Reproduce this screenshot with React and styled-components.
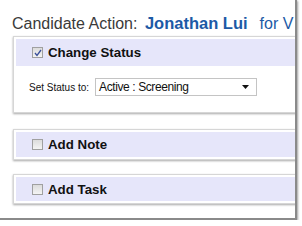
import styled, { createGlobalStyle } from "styled-components"

const Global = createGlobalStyle`
  html, body { margin: 0; padding: 0; background: #fff; }
  body { font-family: "Liberation Sans", Arial, sans-serif; }
`;

const Frame = styled.div`
  width: 297px;
  height: 220px;
  overflow: hidden;
  background: #fff;
  border-right: 2px solid #8a8a8a;
  border-bottom: 2px solid #8a8a8a;
  box-shadow: 1px 1px 2px rgba(0,0,0,0.35), 0 -1px 2px rgba(0,0,0,0.08);
  padding: 13px 0 0 13px;
  box-sizing: border-box;
`;

const Title = styled.div`
  font-size: 16px;
  color: #3a3a3a;
  white-space: nowrap;
  line-height: 20px;
  margin-left: -1px;
`;

const Name = styled.span`
  color: #1c5aa6;
  font-weight: bold;
  font-size: 16.5px;
  margin-left: 3px;
`;

const ForText = styled.span`
  color: #1c5aa6;
  font-size: 16px;
  margin-left: 12px;
`;

const Panel = styled.div`
  width: 320px;
  margin-top: ${p => p.$top}px;
  border: 1px solid #d6d6d6;
  padding: 2px;
  box-shadow: 0 1px 2px rgba(0,0,0,0.35);
  background: #fff;
`;

const Header = styled.div`
  display: flex;
  align-items: center;
  gap: 5px;
  height: ${p => p.$h}px;
  padding-left: 16px;
  background: #e6e6fa;
  font-size: 13.3px;
  font-weight: bold;
  color: #111;
`;

const Box = styled.span`
  width: 9px;
  height: 9px;
  border: 1px solid #a0a0a0;
  background: linear-gradient(#dcdcdc, #f4f4f4);
  display: flex;
  align-items: center;
  justify-content: center;
`;

const Body = styled.div`
  display: flex;
  align-items: center;
  gap: 6px;
  padding: 12px 0 14px 13px;
  font-size: 10px;
  color: #111;
`;

const Select = styled.div`
  width: 150px;
  height: 16px;
  border: 1px solid #c4c4c4;
  display: flex;
  align-items: center;
  justify-content: space-between;
  padding: 0 7px 0 3px;
  font-size: 12px;
  letter-spacing: -0.4px;
  box-sizing: content-box;
`;

const Check = ({ on }) => (
  <Box>
    {on && (
      <svg width="8" height="8" viewBox="0 0 8 8">
        <path d="M1 4 L3 6.5 L7 1" fill="none" stroke="#3a4f9a" strokeWidth="1.3" />
      </svg>
    )}
  </Box>
);

export default function App() {
  return (
    <>
      <Global />
      <Frame>
        <Title>
          Candidate Action: <Name>Jonathan Lui</Name>
          <ForText>for V</ForText>
        </Title>
        <Panel $top={2}>
          <Header $h={27}><Check on />Change Status</Header>
          <Body>
            Set Status to:
            <Select>
              <span>Active : Screening</span>
              <svg width="7" height="4" viewBox="0 0 7 4"><path d="M0 0 H7 L3.5 4 Z" fill="#111" /></svg>
            </Select>
          </Body>
        </Panel>
        <Panel $top={16}>
          <Header $h={25}><Check />Add Note</Header>
        </Panel>
        <Panel $top={14}>
          <Header $h={24}><Check />Add Task</Header>
        </Panel>
      </Frame>
    </>
  )
}
